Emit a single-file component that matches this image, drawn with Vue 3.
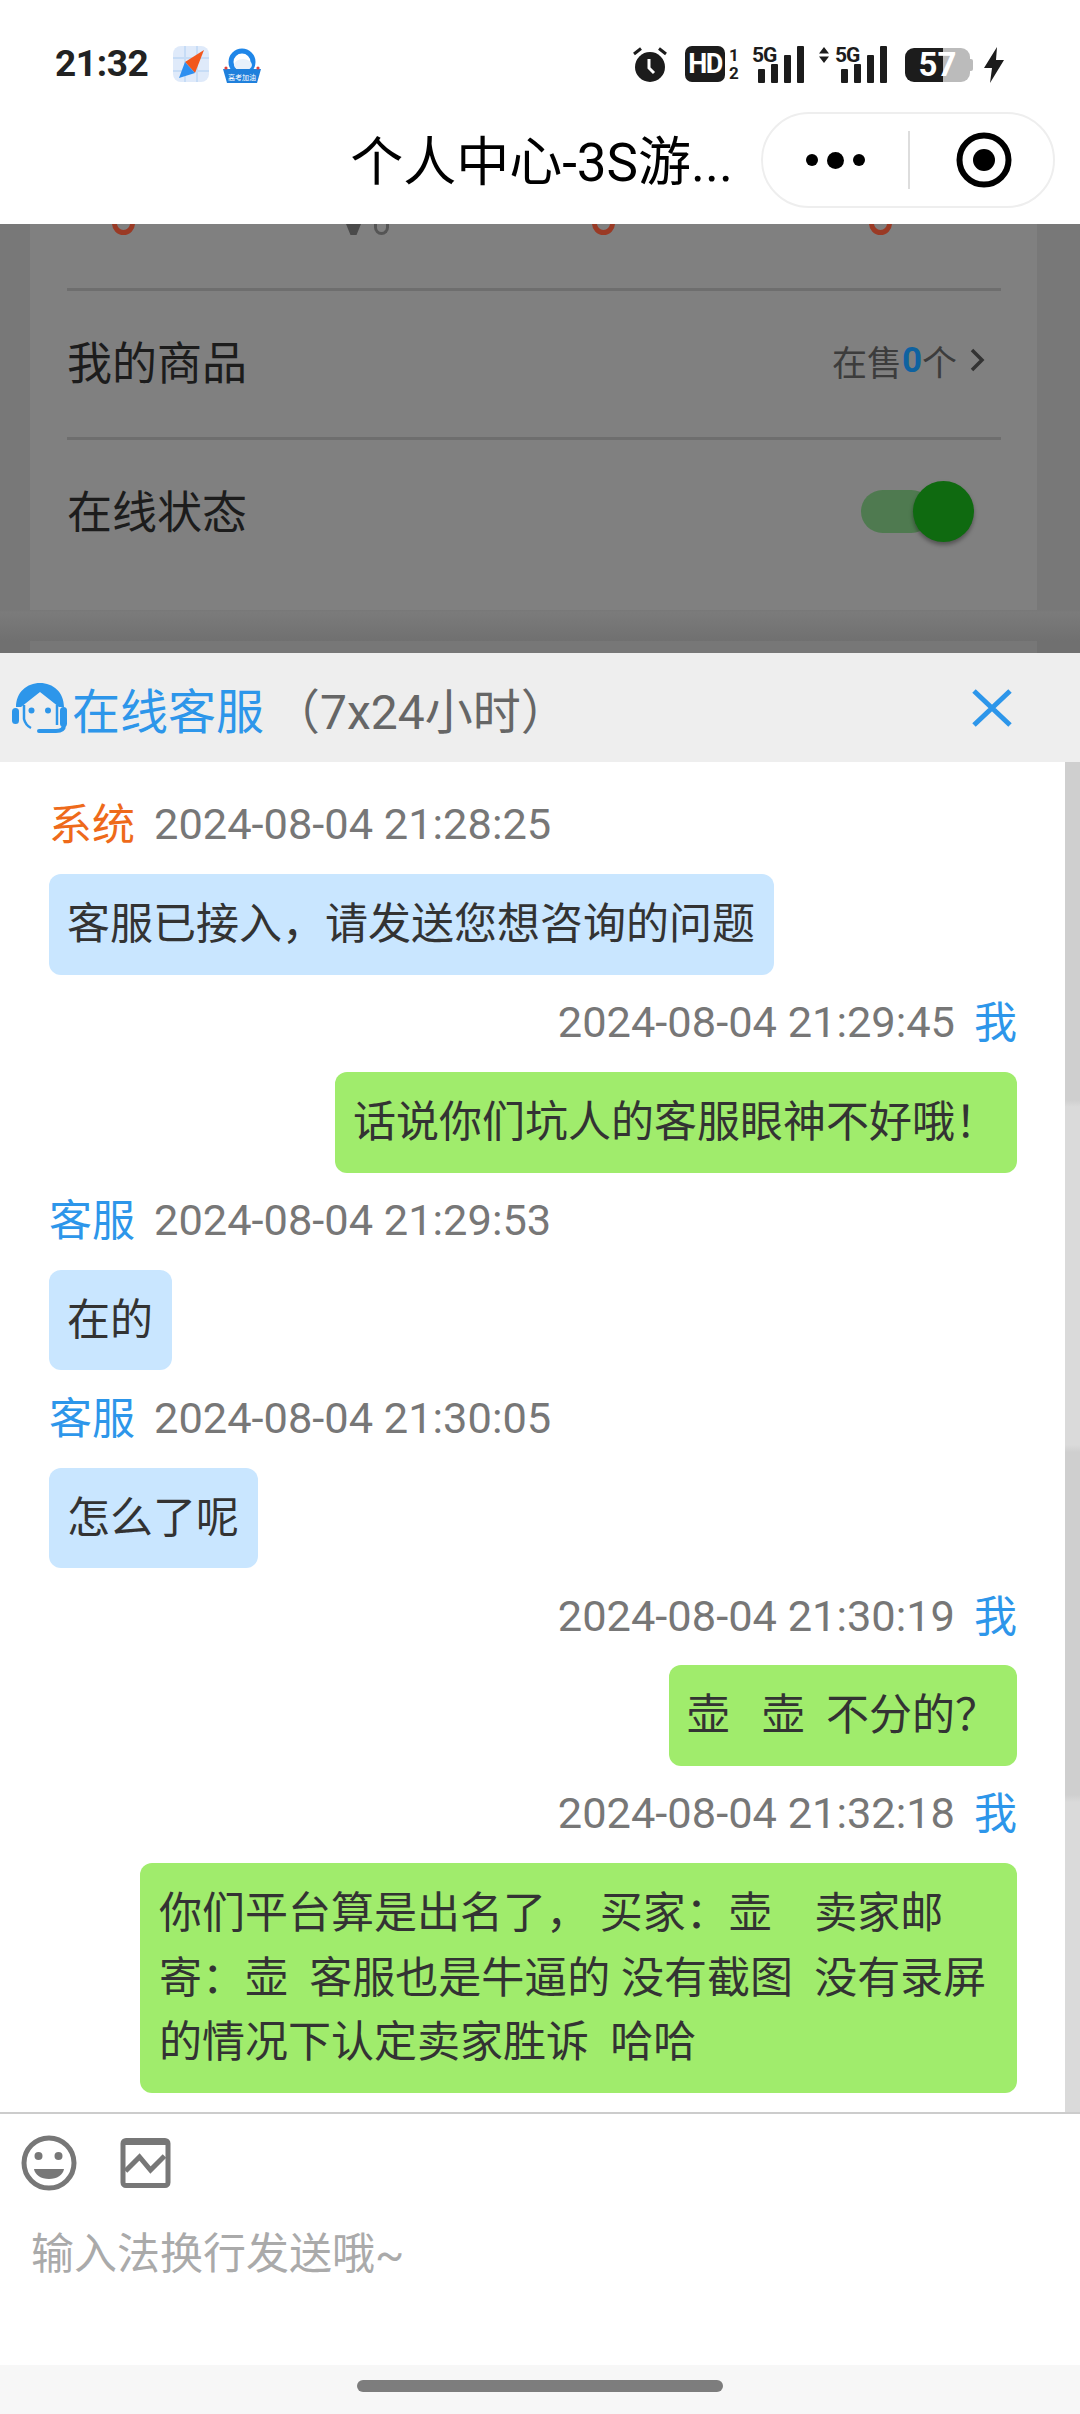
<script setup>
const messages = [
  { side: 'left', name: '系统', nameClass: 'orange', time: '2024-08-04 21:28:25', lines: ['客服已接入，请发送您想咨询的问题'] },
  { side: 'right', name: '我', nameClass: 'blue', time: '2024-08-04 21:29:45', lines: ['话说你们坑人的客服眼神不好哦！'] },
  { side: 'left', name: '客服', nameClass: 'blue', time: '2024-08-04 21:29:53', lines: ['在的'] },
  { side: 'left', name: '客服', nameClass: 'blue', time: '2024-08-04 21:30:05', lines: ['怎么了呢'] },
  { side: 'right', name: '我', nameClass: 'blue', time: '2024-08-04 21:30:19', lines: ['壶   壶  不分的？'] },
  { side: 'right', name: '我', nameClass: 'blue', time: '2024-08-04 21:32:18', wide: true, lines: ['你们平台算是出名了， 买家：壶    卖家邮', '寄：壶  客服也是牛逼的 没有截图  没有录屏', '的情况下认定卖家胜诉  哈哈'] },
]
</script>

<template>
  <div class="page">
    <header class="top">
      <div class="status">
        <span class="clock">21:32</span>
        <svg class="app-a" viewBox="0 0 36 36">
          <rect width="36" height="36" rx="8" fill="#dfeafa" />
          <path d="M0 12H36M0 25H36M12 0V36M24 0V36" stroke="#c6dcf6" stroke-width="2" />
          <path d="M31 4 L22 27 L12 16 Z" fill="#f2571c" />
          <path d="M12 16 L22 27 L6 32 Z" fill="#2e8ff0" />
        </svg>
        <svg class="app-b" viewBox="0 0 40 36">
          <circle cx="20" cy="14" r="11" fill="none" stroke="#1f86e8" stroke-width="5" />
          <ellipse cx="21" cy="17" rx="9" ry="6" fill="#e8f1fb" />
          <path d="M1 21H39L35 35H5Z" fill="#1f80dc" />
          <circle cx="4" cy="20" r="1.6" fill="#e0413a" />
          <circle cx="36" cy="20" r="1.6" fill="#e0413a" />
          <text x="20" y="32" text-anchor="middle" class="tiny">高考加油</text>
        </svg>
        <div class="status-right">
          <svg class="s-alarm" viewBox="0 0 36 36">
            <circle cx="18" cy="21" r="15" fill="#1c1c1c" />
            <path d="M2 8 L9 2.5 M34 8 L27 2.5" stroke="#1c1c1c" stroke-width="3" />
            <path d="M17 13V22L22 27" stroke="#fff" stroke-width="3" fill="none" />
          </svg>
          <div class="hd">HD</div>
          <div class="sim"><span>1</span><span>2</span></div>
          <div class="net">
            <span class="g5">5G</span>
            <i class="b b1"></i><i class="b b2"></i><i class="b b3"></i><i class="b b4"></i>
          </div>
          <div class="net second">
            <svg class="updown" viewBox="0 0 10 16"><path d="M5 0L10 6.5H0ZM5 16L0 9.5H10Z" fill="#1c1c1c" /></svg>
            <span class="g5">5G</span>
            <i class="b b1"></i><i class="b b2"></i><i class="b b3"></i><i class="b b4"></i>
          </div>
          <div class="battery"><span>57</span></div>
          <svg class="bolt" viewBox="0 0 22 36"><path d="M14 0 L1 21 H9 L7 36 L21 13 H13 Z" fill="#1c1c1c" /></svg>
        </div>
      </div>
      <div class="nav">
        <div class="title">个人中心-3S游...</div>
        <div class="capsule">
          <div class="dots"><i></i><i class="big"></i><i></i></div>
          <div class="sep"></div>
          <svg class="target" viewBox="0 0 56 56">
            <circle cx="28" cy="28" r="24.5" fill="none" stroke="#000" stroke-width="6" />
            <circle cx="28" cy="28" r="11" fill="#000" />
          </svg>
        </div>
      </div>
    </header>

    <section class="dim">
      <div class="card">
        <div class="peek">
          <i class="ring"></i>
          <span class="glyph"><i class="wedge"></i><i class="zero"></i></span>
          <i class="ring"></i>
          <i class="ring"></i>
        </div>
        <div class="row">
          <span class="label">我的商品</span>
          <span class="sale">在售<b>0</b>个
            <svg class="chev" viewBox="0 0 16 24"><path d="M3 2L13 12L3 22" fill="none" stroke="#333" stroke-width="3.5" /></svg>
          </span>
        </div>
        <div class="row last">
          <span class="label">在线状态</span>
          <div class="toggle"><div class="knob"></div></div>
        </div>
      </div>
      <div class="card next"></div>
    </section>

    <section class="panel">
      <div class="panel-head">
        <svg class="agent" viewBox="0 0 55 50">
          <path d="M4 24C4 9 15 0 28 0S52 9 52 24H47L28 9L9 24Z" fill="#2d96ea" />
          <path d="M12 22V36C13 40 15 43 19 45" fill="none" stroke="#2d96ea" stroke-width="2.5" />
          <path d="M45 22V42" fill="none" stroke="#2d96ea" stroke-width="2.5" />
          <rect x="0" y="25" width="7" height="16" rx="3.5" fill="#2d96ea" />
          <rect x="48" y="24" width="7" height="20" rx="3.5" fill="#2d96ea" />
          <path d="M52 42C52 46 49 48 44 48H27" fill="none" stroke="#2d96ea" stroke-width="4" stroke-linecap="round" />
          <circle cx="19.5" cy="27.5" r="3" fill="#2d96ea" />
          <circle cx="36" cy="27.5" r="3" fill="#2d96ea" />
        </svg>
        <span class="head-title">在线客服</span>
        <span class="head-sub">（7x24小时）</span>
        <svg class="close" viewBox="0 0 40 38"><path d="M2 2L38 36M38 2L2 36" stroke="#2d96ea" stroke-width="5" fill="none" /></svg>
      </div>

      <div class="chat">
        <div class="list">
          <div v-for="(m, i) in messages" :key="i" class="msg" :class="m.side">
            <div class="meta">
              <template v-if="m.side === 'left'">
                <span :class="m.nameClass">{{ m.name }}</span>
                <span class="time">{{ m.time }}</span>
              </template>
              <template v-else>
                <span class="time">{{ m.time }}</span>
                <span :class="m.nameClass">{{ m.name }}</span>
              </template>
            </div>
            <div class="bubble" :class="{ wide: m.wide }">
              <div v-for="(l, j) in m.lines" :key="j">{{ l }}</div>
            </div>
          </div>
        </div>
        <div class="scroll"></div>
      </div>

      <div class="composer">
        <div class="tools">
          <svg class="smile" viewBox="0 0 56 56">
            <circle cx="28" cy="28" r="25" fill="none" stroke="#777" stroke-width="5" />
            <circle cx="17.5" cy="21" r="4" fill="#777" />
            <circle cx="37.5" cy="21" r="4" fill="#777" />
            <path d="M13 34H43C42 40 36 44 28 44S14 40 13 34Z" fill="#777" />
          </svg>
          <svg class="pic" viewBox="0 0 50 50">
            <rect x="2.5" y="2.5" width="45" height="45" rx="3" fill="none" stroke="#777" stroke-width="5" />
            <path d="M3 4H47" stroke="#777" stroke-width="6" />
            <path d="M5 33L19 19L30 32L44 18" fill="none" stroke="#777" stroke-width="5" />
          </svg>
        </div>
        <div class="placeholder">输入法换行发送哦~</div>
      </div>
    </section>

    <footer class="home"><div class="pill"></div></footer>
  </div>
</template>

<style scoped>
.page {
  width: 1080px;
  height: 2414px;
  display: flex;
  flex-direction: column;
  overflow: hidden;
  background: #fff;
  font-family: Roboto, "Noto Sans CJK SC", sans-serif;
  color: #333;
}
.top {
  height: 224px;
  flex: none;
  background: #fff;
  display: flex;
  flex-direction: column;
}
.status {
  height: 100px;
  display: flex;
  align-items: flex-start;
  padding: 46px 75px 0 55px;
  box-sizing: border-box;
}
.clock {
  font-size: 37px;
  font-weight: 700;
  line-height: 36px;
  letter-spacing: -0.4px;
  color: #222;
  width: 118px;
}
.app-a { width: 36px; height: 36px; margin-right: 13px; }
.app-b { width: 40px; height: 36px; margin-top: 2px; }
.tiny { font-size: 7px; fill: #fff; font-family: "Noto Sans CJK SC", sans-serif; }
.status-right {
  margin-left: auto;
  display: flex;
  align-items: flex-start;
}
.s-alarm { width: 36px; height: 36px; }
.hd {
  width: 40px;
  height: 36px;
  margin-left: 17px;
  border-radius: 7px;
  background: #1c1c1c;
  color: #fff;
  font: 700 27px/36px Roboto, sans-serif;
  text-align: center;
  letter-spacing: -1.5px;
}
.sim {
  width: 10px;
  margin-left: 4px;
  display: flex;
  flex-direction: column;
  font: 700 17px/18px Roboto, sans-serif;
  color: #1c1c1c;
}
.net {
  position: relative;
  width: 52px;
  height: 37px;
  margin-left: 13px;
  display: flex;
  align-items: flex-end;
  justify-content: flex-end;
  gap: 6px;
}
.net.second { width: 68px; margin-left: 15px; }
.g5 {
  position: absolute;
  left: 0;
  top: 0;
  font: 700 21px/18px Roboto, sans-serif;
  color: #1c1c1c;
  letter-spacing: -1px;
}
.second .g5 { left: 16px; }
.updown { position: absolute; left: 0; top: 1px; width: 10px; height: 16px; }
.b { display: block; width: 7px; background: #1c1c1c; border-radius: 1px; }
.b1 { height: 14px; }
.b2 { height: 19px; }
.b3 { height: 28px; }
.b4 { height: 37px; }
.battery {
  position: relative;
  width: 65px;
  height: 34px;
  margin-left: 18px;
  margin-right: 2px;
  margin-top: 2px;
  border-radius: 9px;
  background: linear-gradient(90deg, #1c1c1c 38px, #bbb 38px);
  text-align: center;
  color: #fff;
  font: 700 33px/34px Roboto, sans-serif;
}
.battery::after {
  content: "";
  position: absolute;
  right: -3px;
  top: 11px;
  width: 3px;
  height: 12px;
  border-radius: 0 2px 2px 0;
  background: #bbb;
}
.bolt { width: 22px; height: 36px; margin-left: 11px; margin-top: 1px; }
.nav {
  height: 124px;
  display: flex;
  align-items: flex-start;
  justify-content: flex-end;
  padding: 12px 25px 0 0;
  box-sizing: border-box;
}
.title {
  font-size: 53px;
  line-height: 96px;
  margin-top: 3px;
  color: #000;
  margin-right: 28px;
  white-space: nowrap;
}
.capsule {
  width: 294px;
  height: 96px;
  box-sizing: border-box;
  border: 2px solid #eee;
  border-radius: 48px;
  display: flex;
  align-items: center;
}
.dots {
  width: 145px;
  display: flex;
  align-items: center;
  justify-content: center;
  gap: 9px;
}
.dots i { width: 12px; height: 12px; border-radius: 50%; background: #000; }
.dots i.big { width: 17px; height: 17px; }
.sep { width: 2px; height: 58px; background: #ddd; }
.target { width: 56px; height: 56px; margin-left: 46px; }

.dim {
  height: 429px;
  flex: none;
  background: linear-gradient(#787878 386px, #7b7b7b 388px, #707070 417px);
  overflow: hidden;
  padding: 0 43px 0 30px;
  box-sizing: border-box;
}
.card {
  height: 386px;
  background: #808080;
  padding: 0 36px 0 37px;
  box-sizing: border-box;
}
.card.next { height: 40px; margin-top: 31px; background: #777; }
.peek {
  height: 67px;
  box-sizing: border-box;
  position: relative;
  border-bottom: 3px solid #6e6e6e;
}
.ring {
  position: absolute;
  top: -12px;
  width: 23px;
  height: 23px;
  box-sizing: border-box;
  border: 5px solid #9a3a25;
  border-radius: 50%;
}
.ring:nth-child(1) { left: 45px; }
.ring:nth-child(3) { left: 525px; }
.ring:nth-child(4) { left: 802px; }
.glyph { position: absolute; left: 279px; top: 0; display: flex; gap: 13px; }
.wedge { width: 15px; height: 11px; background: #4a4a4a; clip-path: polygon(0 0, 100% 0, 70% 100%, 30% 100%); }
.zero { width: 15px; height: 11px; box-sizing: border-box; border: 3px solid #555; border-top: none; border-radius: 0 0 8px 8px; }
.row {
  height: 149px;
  box-sizing: border-box;
  padding-bottom: 8px;
  display: flex;
  align-items: center;
  justify-content: space-between;
  border-bottom: 3px solid #6e6e6e;
}
.row.last { border-bottom: none; height: 170px; padding-bottom: 31px; }
.label { font-size: 45px; color: #1c1c1c; }
.sale {
  font-size: 35px;
  color: #3c3c3c;
  display: flex;
  align-items: center;
  padding-right: 16px;
}
.sale b { color: #0f62a0; font-weight: 700; }
.chev { width: 16px; height: 24px; margin-left: 12px; }
.toggle {
  position: relative;
  width: 72px;
  height: 43px;
  margin-right: 68px;
  margin-top: 4px;
  border-radius: 22px;
  background: #4f7a50;
}
.knob {
  position: absolute;
  left: 52px;
  top: -9px;
  width: 61px;
  height: 61px;
  border-radius: 50%;
  background: #0f6a10;
  box-shadow: 0 3px 4px rgba(0, 0, 0, .35);
}

.panel {
  flex: 1;
  display: flex;
  flex-direction: column;
  min-height: 0;
}
.panel-head {
  height: 109px;
  flex: none;
  background: #eee;
  display: flex;
  align-items: center;
  padding: 0 68px 0 12px;
  box-sizing: border-box;
}
.agent { width: 55px; height: 50px; margin-right: 5px; }
.head-title { font-size: 48px; color: #2d96ea; }
.head-sub { font-size: 48px; color: #666; margin-left: 8px; }
.close { width: 40px; height: 38px; margin-left: auto; }

.chat {
  flex: 1;
  min-height: 0;
  display: flex;
  background: #fff;
}
.list {
  flex: 1;
  padding: 15px 48px 0 49px;
  box-sizing: border-box;
  overflow: hidden;
}
.msg {
  display: flex;
  flex-direction: column;
  padding-top: 16.4px;
  align-items: flex-start;
}
.msg.right { align-items: flex-end; }
.meta {
  font-size: 43px;
  line-height: 64.5px;
  margin-bottom: 16.4px;
  display: flex;
  gap: 19px;
  white-space: nowrap;
}
.time { color: #777; font-size: 43.4px; }
.orange { color: #ee6a1a; }
.blue { color: #2d96ea; }
.bubble {
  font-size: 43px;
  line-height: 64.5px;
  padding: 18px 19px 18px 18px;
  border-radius: 12px;
  white-space: pre;
  color: #333;
}
.left .bubble { background: #c9e6ff; }
.right .bubble { background: #a0ec6c; }
.bubble.wide { width: 877px; box-sizing: border-box; padding-left: 19px; }
.scroll {
  width: 15px;
  flex: none;
  background: linear-gradient(#cfcfcf 338px, #dadada 345px, #dadada 683px, #cfcfcf 690px, #cfcfcf 1033px, #dadada 1040px);
}

.composer {
  height: 253px;
  flex: none;
  border-top: 2px solid #ccc;
  box-sizing: border-box;
  padding: 21px 0 0 21px;
}
.tools { display: flex; align-items: center; gap: 43px; height: 56px; }
.smile { width: 56px; height: 56px; }
.pic { width: 51px; height: 50px; }
.placeholder {
  margin: 31px 0 0 10px;
  font-size: 43px;
  line-height: 64.5px;
  color: #aaa;
}
.home {
  height: 49px;
  flex: none;
  background: #f7f7f7;
  display: flex;
  justify-content: center;
  padding-top: 15px;
  box-sizing: border-box;
}
.pill { width: 366px; height: 12px; border-radius: 6px; background: #7d7d7d; }
</style>
